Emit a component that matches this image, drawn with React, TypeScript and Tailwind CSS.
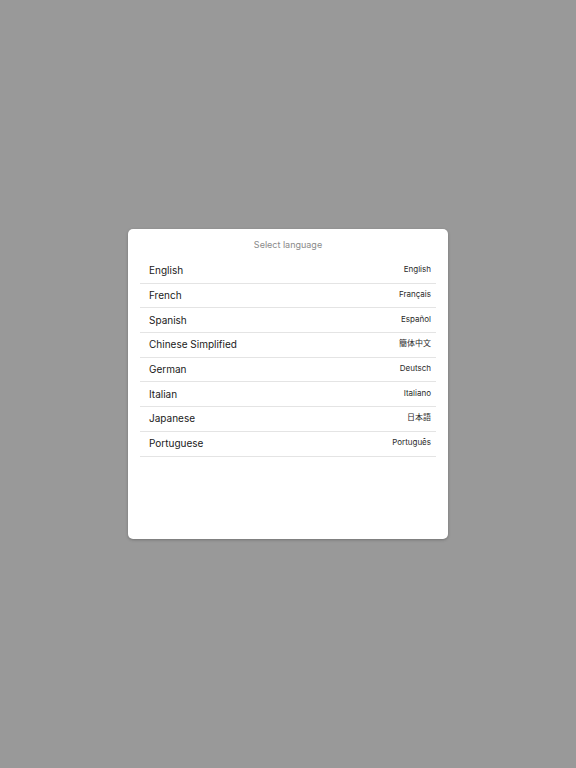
const LANGUAGES = [
  { name: "English", native: "English" },
  { name: "French", native: "Français" },
  { name: "Spanish", native: "Español" },
  { name: "Chinese Simplified", native: "簡体中文" },
  { name: "German", native: "Deutsch" },
  { name: "Italian", native: "Italiano" },
  { name: "Japanese", native: "日本語" },
  { name: "Portuguese", native: "Português" },
];

export default function App() {
  return (
    <div
      className="flex h-[768px] w-full items-center justify-center bg-[#999999]"
      style={{ fontFamily: 'Inter, "Noto Sans CJK JP", sans-serif' }}
    >
      <div className="flex h-[310px] w-[320px] flex-col rounded-[5px] bg-white px-3 shadow-[0_1px_3px_rgba(0,0,0,0.25)]">
        <div className="pt-[11px] pb-[9px] text-center text-[9px] leading-[10px] text-[#8a8a8a]">
          Select language
        </div>
        <ul>
          {LANGUAGES.map((lang) => (
            <li
              key={lang.name}
              className="flex h-[24.7px] items-center justify-between border-b-[1.5px] border-[#e4e4e4] pl-[9px] pr-[5px]"
            >
              <span className="text-[10px] text-[#1a1a1a]">{lang.name}</span>
              <span className="mb-[3px] text-[8px] text-[#2a2a2a]">{lang.native}</span>
            </li>
          ))}
        </ul>
      </div>
    </div>
  );
}
